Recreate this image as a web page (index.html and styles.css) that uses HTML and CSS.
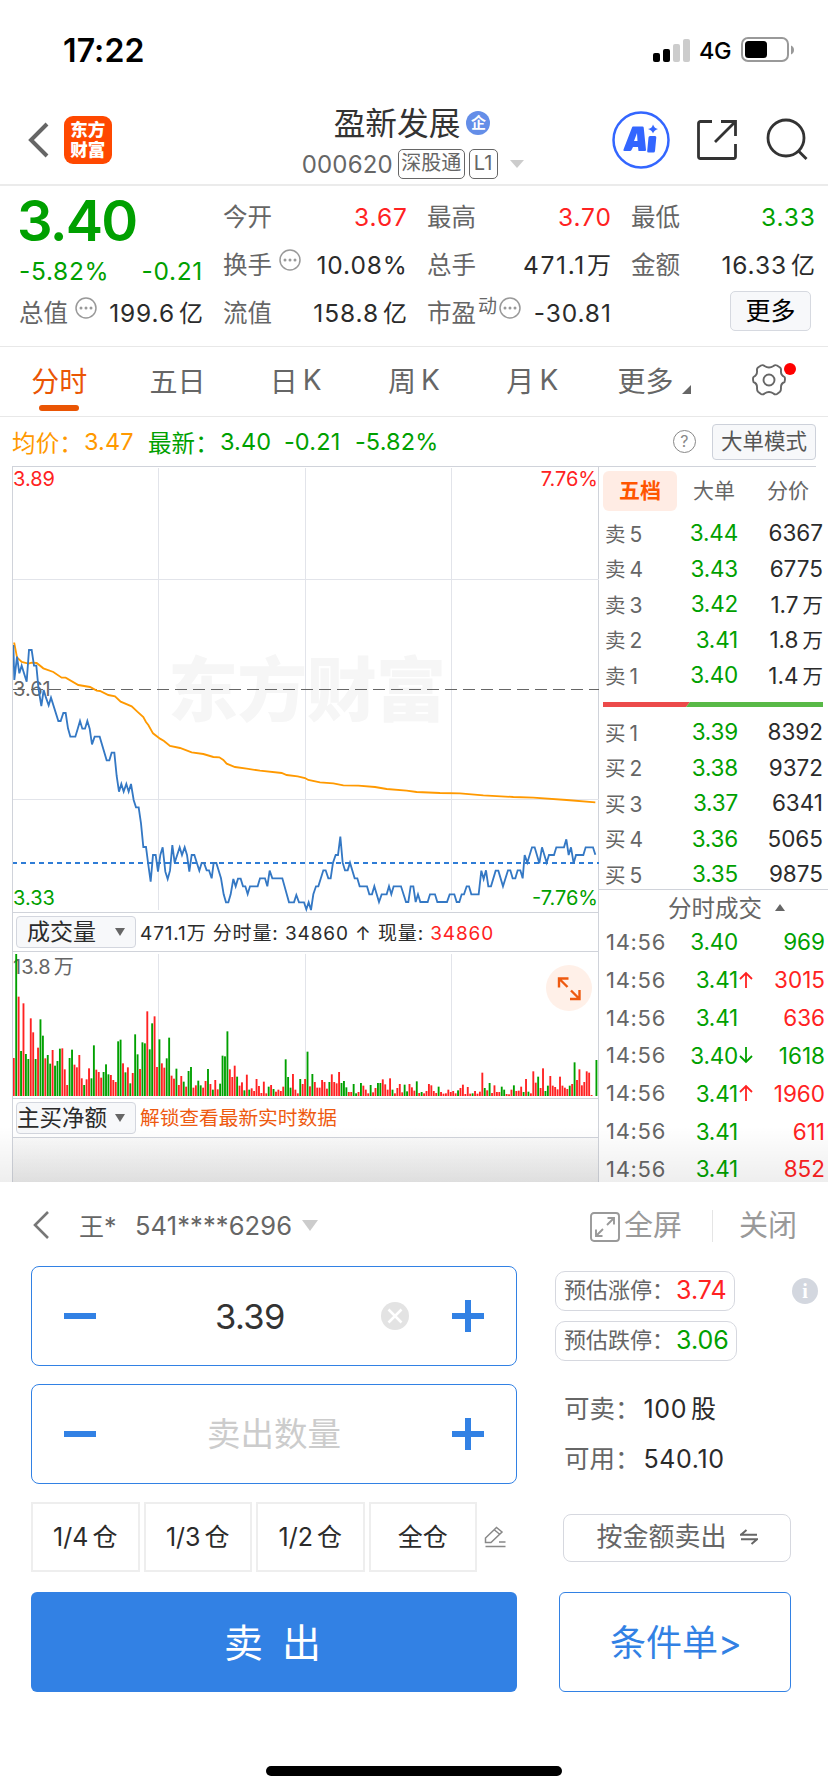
FILE: index.html
```html
<!DOCTYPE html>
<html lang="zh-CN">
<head>
<meta charset="utf-8">
<title>盈新发展 000620</title>
<link rel="stylesheet" href="styles.css">
</head>
<body>
<div class="screen">
  <div class="status">
    <span class="clock">17:22</span>
    <div class="status-right">
      <svg width="37" height="23" viewBox="0 0 37 23"><rect x="0" y="14" width="7" height="9" rx="2"/><rect x="10" y="10" width="7" height="13" rx="2"/><rect x="20" y="5" width="7" height="18" rx="2" fill="#ccc"/><rect x="30" y="0" width="7" height="23" rx="2" fill="#ccc"/></svg>
      <span class="net">4G</span>
      <svg width="54" height="26" viewBox="0 0 54 26"><rect x="1" y="1" width="46" height="23" rx="6" fill="none" stroke="#999" stroke-width="2"/><rect x="4" y="4" width="22" height="17" rx="3.5"/><path d="M50 8.500c4 1.500 4 7.500 0 9z" fill="#999"/></svg>
    </div>
  </div>

  <header class="header">
    <svg class="back" width="22" height="36" viewBox="0 0 22 36"><path d="M19 2 3 18l16 16" fill="none" stroke="#666" stroke-width="4"/></svg>
    <div class="logo"><span>东方</span><span>财富</span></div>
    <div class="title-block">
      <div class="title-line"><span class="stock-name">盈新发展</span><span class="corp">企</span></div>
      <div class="code-line"><span class="code">000620</span><span class="tag">深股通</span><span class="tag tag-l1">L1</span><i class="caret"></i></div>
    </div>
    <svg class="ai" width="58" height="58" viewBox="0 0 58 58"><circle cx="29" cy="29" r="27.500" fill="none" stroke="#36f" stroke-width="2.500"/><path fill="#36f" fill-rule="evenodd" d="M21 15.500h9.500q1 0 1.200 1L34 39q0 1-1 1h-6.500l-.500-4h-5l-1.500 3q-.500 1-1.500 1h-5.500q-1.500 0-1-1.500L20 16.500q.300-1 1-1zM25 22l-3 8h3.500z"/><path fill="#36f" d="M38 25h5q1.500 0 1.300 1.500L43 40q-.200 1.500-1.500 1.500h-5q-1.500 0-1.300-1.500L36.500 26.500Q36.700 25 38 25zM41 13.500q1.500 4 5 4.500-4 1-5 4.500-1-3.500-5-4.500 4-.500 5-4.500z"/></svg>
    <svg class="share" width="42" height="42" viewBox="0 0 42 42" fill="none" stroke="#333" stroke-width="2.800"><path d="M16 2.500H4.500a2 2 0 0 0-2 2v33a2 2 0 0 0 2 2h33a2 2 0 0 0 2-2V25M25 2.500h14.500V17M39 3 19 23"/></svg>
    <svg class="search" width="44" height="44" viewBox="0 0 44 44" fill="none" stroke="#333" stroke-width="2.800"><circle cx="21" cy="20" r="18"/><path d="m33.500 33 8 8"/></svg>
  </header>

  <section class="quote">
    <div class="q-main">
      <div class="price">3.40</div>
      <div class="cell green"><span>-5.82%</span><span>-0.21</span></div>
      <div class="cell"><label>总值</label><svg class="dots" width="22" height="22" viewBox="0 0 22 22"><circle cx="11" cy="11" r="10" fill="none" stroke="#999" stroke-width="1.500"/><g fill="#999"><circle cx="6" cy="11" r="1.500"/><circle cx="11" cy="11" r="1.500"/><circle cx="16" cy="11" r="1.500"/></g></svg><b>199.6<em>亿</em></b></div>
    </div>
    <div class="q-col">
      <div class="cell"><label>今开</label><b class="red">3.67</b></div>
      <div class="cell"><label>换手</label><svg class="dots" width="22" height="22" viewBox="0 0 22 22"><circle cx="11" cy="11" r="10" fill="none" stroke="#999" stroke-width="1.500"/><g fill="#999"><circle cx="6" cy="11" r="1.500"/><circle cx="11" cy="11" r="1.500"/><circle cx="16" cy="11" r="1.500"/></g></svg><b>10.08%</b></div>
      <div class="cell"><label>流值</label><b>158.8<em>亿</em></b></div>
    </div>
    <div class="q-col">
      <div class="cell"><label>最高</label><b class="red">3.70</b></div>
      <div class="cell"><label>总手</label><b class="loose">471.1<em class="near">万</em></b></div>
      <div class="cell"><label>市盈<sup>动</sup></label><svg class="dots tight" width="22" height="22" viewBox="0 0 22 22"><circle cx="11" cy="11" r="10" fill="none" stroke="#999" stroke-width="1.500"/><g fill="#999"><circle cx="6" cy="11" r="1.500"/><circle cx="11" cy="11" r="1.500"/><circle cx="16" cy="11" r="1.500"/></g></svg><b>-30.81</b></div>
    </div>
    <div class="q-col">
      <div class="cell"><label>最低</label><b class="green">3.33</b></div>
      <div class="cell"><label>金额</label><b>16.33<em>亿</em></b></div>
      <button class="more">更多</button>
    </div>
  </section>

  <nav class="tabs">
    <span class="tab on">分时</span><span class="tab">五日</span><span class="tab">日<i>K</i></span><span class="tab">周<i>K</i></span><span class="tab">月<i>K</i></span><span class="tab">更多<svg class="corner" width="10" height="10"><path d="M9 0v9H0z" fill="#666"/></svg></span>
    <span class="tab gear"><svg width="36" height="36" viewBox="-18 -18 36 36" fill="none" stroke="#666" stroke-width="1.900" stroke-linejoin="round"><circle r="5.500"/><path d="M-8-14.500q2-1 3.500.500 4.500 3 9 0 1.500-1.500 3.500-.500l3 2q1.300 1 1 3-.500 4.500 3.500 6.500 1 1.500 0 5-4 1.500-3.500 6.500 0 2-1 3.200l-3 2.300q-2 1-3.500-.500-4.500-3-9 0-1.500 1.500-3.500.500l-3-2.300q-1-1.200-1-3.200.5-5-3.500-6.500-1-3.500 0-5 4-2 3.500-6.500-.3-2 1-3z"/></svg><u class="dot"></u></span>
  </nav>

  <div class="info">
    <span class="orange">均价：</span><span class="orange i1">3.47</span>
    <span class="green i2">最新：</span><span class="green i3">3.40</span><span class="green i4">-0.21</span><span class="green i5">-5.82%</span>
    <span class="help">?</span><button class="mode">大单模式</button>
  </div>

  <div class="market">
    <div class="charts">
      <svg class="pane" width="586" height="445" viewBox="13 467 586 445">
        <text class="mark" x="168" y="716" textLength="278">东方财富</text>
        <path d="M158.500 468v442M305.500 468v442M451.500 468v442M13 579.500h586M13 799.500h586" stroke="#e2e4ea" fill="none"/>
        <path d="M13 689.500h586" stroke="#666" stroke-dasharray="12 6"/>
        <path d="M13 863h586" stroke="#2e7cd6" stroke-width="2" stroke-dasharray="5 4" stroke-dashoffset="1"/>
        <g class="axis"><text x="13" y="486" fill="#f22">3.89</text><text x="598" y="486" fill="#f22" text-anchor="end">7.76%</text><text x="13" y="696" fill="#666">3.61</text><text x="13" y="905" fill="#00a000">3.33</text><text x="598" y="905" fill="#00a000" text-anchor="end">-7.76%</text></g>
        <g transform="translate(0 620) scale(.33333)" fill="none" stroke-width="5.500">
          <polyline stroke="#ff9900" points="40,70 43,70 51,112 65,126 85,131 95,128 110,129 130,145 160,156 185,173 197,173 235,195 270,201 290,212 300,213 325,225 345,229 362,245 395,259 412,275 430,291 438,306 445,315 459,340 480,356 492,363 510,378 540,384 575,397 610,402 640,411 658,412 670,420 680,431 705,441 740,446 780,452 845,459 860,465 893,469 915,474 925,480 960,487 1000,490 1030,496 1075,497 1125,501 1160,507 1220,512 1250,516 1320,519 1380,520 1450,526 1540,531 1600,533 1700,540 1786,547"/>
          <polyline stroke="#3478c4" points="40,75 43,180 51,110 58,160 65,137 80,185 87,90 95,90 102,137 109,137 116,210 124,258 131,210 138,233 146,256 153,233 175,303 182,303 190,279 197,279 204,325 211,350 226,350 233,327 240,303 247,326 255,326 262,303 269,326 276,373 284,350 299,350 320,421 328,421 335,398 343,398 350,468 357,515 364,492 371,515 379,492 386,515 393,492 401,540 408,562 416,562 423,610 430,681 438,681 445,735 452,785 459,705 467,705 474,755 481,705 488,682 496,755 503,777 510,752 517,675 524,728 539,682 546,705 554,682 561,705 568,755 575,705 583,705 598,752 605,729 612,729 620,751 627,751 635,775 641,729 649,729 663,775 671,823 678,847 685,847 692,823 700,777 707,799 714,776 722,776 729,799 736,799 743,822 750,799 773,799 780,775 795,775 802,799 809,752 817,775 847,775 867,847 882,847 889,825 897,847 912,847 919,868 926,847 933,870 940,823 948,799 955,799 970,751 977,751 985,775 992,775 999,728 1007,705 1014,705 1021,650 1028,728 1035,751 1043,751 1050,728 1064,775 1072,775 1079,799 1101,799 1108,823 1116,823 1123,799 1137,846 1145,823 1160,823 1167,799 1174,823 1181,799 1203,799 1218,846 1225,846 1232,799 1240,799 1247,846 1254,823 1261,846 1283,846 1290,823 1305,823 1312,846 1341,846 1349,823 1363,823 1370,846 1378,846 1385,823 1392,823 1400,799 1407,799 1414,823 1436,823 1444,752 1451,777 1458,751 1465,799 1473,799 1487,752 1495,752 1509,799 1524,751 1531,751 1538,775 1546,775 1553,751 1561,751 1568,775 1574,705 1582,728 1596,682 1604,682 1618,730 1626,682 1640,728 1647,705 1662,705 1669,682 1692,682 1699,658 1706,705 1713,682 1721,730 1728,705 1750,705 1757,682 1779,682 1786,704"/>
        </g>
      </svg>
      <div class="bar-row"><button class="sel">成交量<i></i></button><span class="vol-text">471.1万 分时量: 34860 ↑ 现量: <span class="red">34860</span></span></div>
      <div class="volume">
        <svg class="pane" width="586" height="146" viewBox="13 952 586 146">
          <path d="M158.500 954v142M305.500 954v142M451.500 954v142" stroke="#e2e4ea"/>
          <text class="axis" x="13" y="974" fill="#666">13.8<tspan dx="3">万</tspan></text>
          <g id="bars" transform="translate(0 900) scale(.33333)"></g>
        </svg>
        <svg class="expand" width="46" height="46" viewBox="0 0 46 46" fill="none" stroke="#ee5a10" stroke-width="2.400"><circle cx="23" cy="23" r="23" fill="#fff0e8" stroke="none"/><path d="M22.500 13.500H13v9M13.500 14l8 8M24 34h9.500v-9M33 33.500l-8-8"/></svg>
      </div>
      <div class="bar-row third"><button class="sel sel-wide">主买净额<i></i></button><span class="unlock">解锁查看最新实时数据</span></div>
      <div class="locked"></div>
    </div>

    <aside class="book">
      <div class="book-tabs"><span class="on">五档</span><span>大单</span><span>分价</span></div>
      <div class="levels">
        <div><label>卖<i>5</i></label><b>3.44</b><span>6367</span></div>
        <div><label>卖<i>4</i></label><b>3.43</b><span>6775</span></div>
        <div><label>卖<i>3</i></label><b>3.42</b><span>1.7<em>万</em></span></div>
        <div><label>卖<i>2</i></label><b>3.41</b><span>1.8<em>万</em></span></div>
        <div><label>卖<i>1</i></label><b>3.40</b><span>1.4<em>万</em></span></div>
      </div>
      <svg class="ratio" width="220" height="5"><path d="M0 0h87l-4 5H0z" fill="#ec4a4a"/><path d="M87 0h133v5H83z" fill="#58b947"/></svg>
      <div class="levels">
        <div><label>买<i>1</i></label><b>3.39</b><span>8392</span></div>
        <div><label>买<i>2</i></label><b>3.38</b><span>9372</span></div>
        <div><label>买<i>3</i></label><b>3.37</b><span>6341</span></div>
        <div><label>买<i>4</i></label><b>3.36</b><span>5065</span></div>
        <div><label>买<i>5</i></label><b>3.35</b><span>9875</span></div>
      </div>
      <div class="deal-head">分时成交<i></i></div>
      <div class="deals">
        <div><label>14:56</label><b>3.40</b><u></u><span class="green">969</span></div>
        <div><label>14:56</label><b>3.41</b><u><svg width="14" height="18" viewBox="0 0 14 18" fill="none" stroke="#f22" stroke-width="1.800"><path d="M7 17V2M1 8l6-6 6 6"/></svg></u><span class="red">3015</span></div>
        <div><label>14:56</label><b>3.41</b><u></u><span class="red">636</span></div>
        <div><label>14:56</label><b>3.40</b><u><svg width="14" height="18" viewBox="0 0 14 18" fill="none" stroke="#00a000" stroke-width="1.800"><path d="M7 1v15M1 10l6 6 6-6"/></svg></u><span class="green">1618</span></div>
        <div><label>14:56</label><b>3.41</b><u><svg width="14" height="18" viewBox="0 0 14 18" fill="none" stroke="#f22" stroke-width="1.800"><path d="M7 17V2M1 8l6-6 6 6"/></svg></u><span class="red">1960</span></div>
        <div><label>14:56</label><b>3.41</b><u></u><span class="red">611</span></div>
        <div><label>14:56</label><b>3.41</b><u></u><span class="red">852</span></div>
      </div>
    </aside>
    <div class="shade"></div>
  </div>

  <section class="sheet">
    <div class="sheet-head">
      <svg width="17" height="30" viewBox="0 0 17 30"><path d="M15 2 2 15l13 13" fill="none" stroke="#777" stroke-width="2.600"/></svg>
      <span class="holder">王*</span><span class="acct">541****6296</span><i class="caret big"></i>
      <svg class="full-icon" width="30" height="30" viewBox="0 0 30 30" fill="none" stroke="#999" stroke-width="1.900"><rect x="1" y="1" width="28" height="28" rx="3"/><path d="M17.500 6H24v6.500M23.500 6.500 17 13M12.500 24H6v-6.500M6.500 23.500 13 17"/></svg>
      <span class="full">全屏</span><span class="close">关闭</span>
    </div>
    <div class="sheet-body">
      <div class="form">
        <div class="field"><i class="minus"></i><span class="val">3.39</span><svg class="clear" width="28" height="28" viewBox="0 0 28 28"><circle cx="14" cy="14" r="14" fill="#e3e3e3"/><path d="m7.500 7.500 13 13m0-13-13 13" stroke="#fff" stroke-width="2.500"/></svg><i class="plus"></i></div>
        <div class="field"><i class="minus"></i><span class="ph">卖出数量</span><i class="plus"></i></div>
        <div class="chips"><span>1/4<em>仓</em></span><span>1/3<em>仓</em></span><span>1/2<em>仓</em></span><span>全仓</span>
          <svg width="22" height="22" viewBox="0 0 22 22" fill="none" stroke="#888" stroke-width="1.500"><path d="M1.500 20.500h20M15 16h6.500M1.500 16.500v-4.500L12.500 1.500l5.500 4.500L7 16.500zM10.500 4l5.500 4.500"/></svg></div>
        <button class="sell">卖出</button>
      </div>
      <div class="side">
        <div class="limits"><div class="pills"><div class="pill">预估涨停：<b class="red">3.74</b></div><div class="pill">预估跌停：<b class="green">3.06</b></div></div><span class="about">i</span></div>
        <div class="avail"><div>可卖：<b>100<em>股</em></b></div><div>可用：<b>540.10</b></div></div>
        <button class="by-amount">按金额卖出<svg width="18" height="16" viewBox="0 0 18 16" fill="none" stroke="#666" stroke-width="2"><path d="M0 5.800h17M6.500 1 1 5.800M1 10.200h16L11.500 15"/></svg></button>
        <button class="cond">条件单&gt;</button>
      </div>
    </div>
    <div class="home"></div>
  </section>
</div>
<script src="bars.js"></script>
</body>
</html>
```
FILE: styles.css
```css
* { box-sizing: border-box; }
body { margin: 0; background: #fff; color: #2b2b2b; font-family: Inter, "Noto Sans CJK SC", sans-serif; }
button { font: inherit; padding: 0; margin: 0; background: none; }
i, em { font-style: normal; }
b, label { font-weight: 400; }
u { text-decoration: none; }
svg { display: block; flex: none; }
span, label, b, div, button { white-space: nowrap; }
.screen { width: 828px; height: 1792px; overflow: hidden; display: flex; flex-direction: column; }
.red { color: #f22 !important; }
.green { color: #00a000 !important; }
.orange { color: #ff9900; }

.status { height: 100px; padding: 0 33px 0 63px; display: flex; justify-content: space-between; align-items: center; }
.clock { font-size: 32px; font-weight: 600; color: #000; letter-spacing: .1px; }
.status-right { display: flex; align-items: center; }
.net { font-size: 23.500px; font-weight: 500; color: #000; margin: 0 10px 0 9px; letter-spacing: -.3px; width: 32px; }

.header { height: 86px; border-bottom: 2px solid #ebebeb; display: flex; position: relative; padding: 0 19px 0 28px; }
.back { margin-top: 22px; }
.logo { width: 48px; height: 48px; margin: 16px 0 0 14px; border-radius: 9px; background: #ff4800; color: #fff; display: flex; flex-direction: column; justify-content: center; align-items: center; font-size: 17.500px; font-weight: 900; line-height: 19.500px; padding-bottom: 1px; }
.title-block { width: 224px; margin-left: 190px; }
.title-line { display: flex; align-items: center; height: 46px; padding-left: 32px; }
.stock-name { font-size: 31.700px; color: #333; margin-top: -4px; }
.corp { width: 24px; height: 24px; border-radius: 50%; margin-left: 6px; background: #648ee8; color: #fff; font-size: 15px; font-weight: 700; line-height: 23px; text-align: center; }
.code-line { display: flex; align-items: center; height: 36px; }
.code { font-size: 24px; color: #666; width: 96px; letter-spacing: .2px; }
.tag { width: 67px; height: 30px; border: 1.500px solid #666; border-radius: 5px; font-size: 20px; line-height: 27px; text-align: center; color: #666; }
.tag-l1 { width: 29px; margin-left: 4px; }
.caret { border: 7px solid transparent; border-top: 8px solid #ccc; border-bottom: 0; margin: 0 0 0 12px; }
.ai { margin: 11px 0 0 88px; }
.share { margin: 19px 0 0 26px; }
.search { margin: 18px 0 0 27px; }

.quote { height: 161px; border-bottom: 1px solid #e8e8e8; display: grid; grid-template-columns: repeat(4, 184px); column-gap: 20px; padding: 7px 0 0 19px; }
.price { color: #00a000; font-size: 56px; font-weight: 600; line-height: 56px; height: 60px; letter-spacing: -1.800px; margin-left: -2px; }
.q-main .price + .cell { height: 36px; letter-spacing: .7px; }
.cell { height: 48px; display: flex; align-items: center; justify-content: space-between; font-size: 24.500px; line-height: 48px; position: relative; }
.cell label { color: #666; font-size: 24.500px; }
.cell b { margin-left: auto; margin-right: -.8px; letter-spacing: .9px; }
.cell .loose { letter-spacing: 1.700px; }
.cell em { margin-left: 4px; font-size: 24px; letter-spacing: .8px; }
.cell em.near { margin-left: 1px; }
.cell sup { font-size: 19px; line-height: 0; vertical-align: 9px; margin-left: 2px; }
.dots { margin: -10px 0 0 7px; }
.dots.tight { margin-left: 2px; }
.more { width: 81px; height: 40px; margin: 2px 0 0 99px; border: 1px solid #d6d9e0; border-radius: 5px; background: #f7f8fa; font-size: 25px; line-height: 37px; }

.tabs { height: 70px; border-bottom: 1px solid #e8e8e8; display: grid; grid-template-columns: repeat(7, 1fr); padding-bottom: 3px; }
.tab { position: relative; display: flex; align-items: center; justify-content: center; font-size: 28px; color: #666; }
.tab i { margin-left: 5px; }
.tab.on { color: #ea5504; }
.tab.on::after { content: ""; position: absolute; left: 39px; bottom: 2px; width: 40px; height: 6px; border-radius: 3px; background: #ea5504; }
.corner { margin: 19px -8px 0 8px; }
.dot { position: absolute; right: 32px; top: 16px; width: 12px; height: 12px; border-radius: 50%; background: #f00; }

.info { height: 49px; padding: 0 12px; display: flex; align-items: center; font-size: 23.500px; letter-spacing: .15px; }
.i1, .i3 { width: 64px; margin-left: 1px; }
.i4 { width: 71px; }
.help { margin-left: auto; width: 23px; height: 23px; border: 1.500px solid #888; border-radius: 50%; color: #888; font-size: 16px; line-height: 20px; text-align: center; }
.mode { margin-left: 16px; width: 104px; height: 36px; border: 1px solid #cdd1da; border-radius: 4px; background: #f7f8fa; color: #555; font-size: 21.500px; line-height: 33px; letter-spacing: 0; }

.market { height: 716px; position: relative; display: flex; overflow: hidden; }
.charts { width: 587px; margin-left: 12px; flex: none; border-left: 1px solid #d0d3da; border-right: 1px solid #d0d3da; border-top: 1px solid #d0d3da; }
.pane { margin-right: -1px; }
.mark { font-size: 70px; font-weight: 900; fill: #f6f6f6; }
.axis { font-size: 20px; }
.bar-row { height: 40px; border-top: 1px solid #d0d3da; border-bottom: 1px solid #d0d3da; display: flex; align-items: center; padding-left: 3px; }
.sel { width: 120px; height: 32px; flex: none; border: 1px solid #d3d6de; border-radius: 4px; background: #f7f8fa; color: #2b2b2b; display: flex; align-items: center; justify-content: space-between; padding: 0 10px; font-size: 23px; line-height: 30px; }
.sel i { border: 5px solid transparent; border-top: 8px solid #666; border-bottom: 0; }
.sel-wide { padding-left: 0; font-size: 22.500px; }
.vol-text { margin: -2px 0 0 4px; font-size: 19px; letter-spacing: .87px; }
.unlock { margin: -3px 0 0 4px; font-size: 19.700px; color: #ee5a10; }
.volume { position: relative; height: 146px; }
.expand { position: absolute; left: 533px; top: 13px; }
.locked { height: 51px; background: linear-gradient(#fafafa, #ececec); }

.book { flex: 1; border-top: 1px solid #fff; padding: 0 5px 0 4px; position: relative; }
.book::before { content: ""; position: absolute; left: 0; top: -1px; width: 217px; height: 1px; background: #d0d3da; }
.book-tabs { height: 45px; padding-top: 4px; display: flex; font-size: 21px; line-height: 40px; color: #666; }
.book-tabs span { width: 74px; height: 40px; border-radius: 6px; text-align: center; }
.book-tabs .on { background: #ffece4; color: #ff5500; font-weight: 700; }
.levels { height: 178px; margin: 3px 0 0; }
.levels div, .deals div { height: 35.500px; display: flex; align-items: center; font-size: 22.500px; padding: 0 2px 0 2px; }
.levels label { width: 60px; color: #666; font-size: 20.500px; }
.levels i { margin-left: 4px; font-size: 21px; }
.levels b, .deals b { width: 73px; text-align: right; color: #00a000; letter-spacing: -.2px; }
.levels span, .deals span { margin-left: auto; text-align: right; }
.levels em { margin-left: 4px; font-size: 20.500px; }
.ratio { margin: 9px 0 7px 0; }
.deal-head { height: 36px; margin: -3px -5px 0 -4px; border-top: 1px solid #d0d3da; padding-left: 69px; display: flex; align-items: center; font-size: 23.500px; color: #666; padding-bottom: 1px; }
.deal-head i { margin-left: 13px; border: 5px solid transparent; border-bottom: 7px solid #666; border-top: 0; }
.deals { margin-top: -2px; }
.deals div { height: 37.850px; padding: 0 0 0 3px; }
.deals label { width: 59px; color: #666; font-size: 22px; letter-spacing: .7px; }
.deals u { width: 14px; margin-left: 1px; }
.shade { position: absolute; left: 0; right: 0; bottom: 0; height: 56px; background: linear-gradient(rgba(0,0,0,0), rgba(0,0,0,.065)); }

.sheet { height: 610px; background: #fff; position: relative; }
.sheet-head { height: 84px; padding: 2px 31px 0 33px; display: flex; align-items: center; font-size: 26px; color: #666; }
.holder { margin-left: 29px; width: 56px; font-size: 25px; }
.acct { width: 157px; font-size: 25.500px; letter-spacing: .1px; }
.caret.big { border-width: 11px 8px 0; margin-left: 10px; }
.full-icon { margin: 3px 4px 0 auto; }
.full, .close { font-size: 29px; line-height: 32px; color: #999; margin-top: 2px; }
.full { border-right: 1.500px solid #e5e5e5; padding-right: 30px; }
.close { padding-left: 26px; }
.sheet-body { display: flex; padding-left: 31px; }
.form { width: 486px; }
.field { height: 100px; margin-bottom: 18px; border: 1.500px solid #3281e4; border-radius: 8px; position: relative; display: flex; align-items: center; justify-content: space-between; padding: 0 32px; }
.minus, .plus { width: 32px; height: 6px; background: #3281e4; position: relative; }
.plus::after { content: ""; position: absolute; left: 13px; top: -13px; width: 6px; height: 32px; background: #3281e4; }
.val { font-size: 34.500px; width: 68px; margin-left: 119px; color: #333; letter-spacing: -.6px; }
.clear { margin: 0 43px 0 auto; }
.ph { font-size: 33.500px; color: #ccc; margin-top: -6px; }
.chips { display: flex; gap: 4px; height: 70px; align-items: center; margin-bottom: 20px; }
.chips span { width: 108.500px; height: 70px; border: 2px solid #eee; font-size: 25px; line-height: 66px; text-align: center; }
.chips em { margin-left: 4px; }
.chips svg { margin-left: 3px; }
.sell { display: block; width: 486px; height: 100px; border: 0; border-radius: 6px; background: #3281e4; color: #fff; font-size: 39px; letter-spacing: 19px; text-indent: 16px; padding-bottom: 4px; }
.side { padding-left: 38px; width: 311px; }
.limits { display: flex; justify-content: space-between; padding-top: 5px; height: 114px; }
.pill { height: 40px; margin-bottom: 10px; border: 1.500px solid #d6d8df; border-radius: 10px; font-size: 22px; line-height: 37px; color: #666; padding: 0 7px 0 8px; width: max-content; }
.pill b { font-size: 25px; vertical-align: -1px; line-height: 30px; margin-left: 2px; }
.about { width: 26px; height: 26px; margin: 7px 10px 0 0; border-radius: 50%; background: #d3d7df; color: #fff; font: 700 20px/26px "Liberation Serif", serif; text-align: center; }
.avail { padding: 4px 0 0 9px; height: 134px; font-size: 25.500px; line-height: 50px; color: #666; }
.avail b { margin-left: 3px; color: #2b2b2b; font-size: 25px; letter-spacing: .6px; }
.avail em { margin-left: 4px; }
.by-amount { width: 228px; height: 48px; margin: 0 0 30px 8px; border: 1.500px solid #d6d8df; border-radius: 8px; display: flex; align-items: center; justify-content: center; gap: 13px; color: #666; font-size: 26px; line-height: 42px; padding-bottom: 3px; }
.cond { display: block; width: 232px; height: 100px; margin-left: 4px; border: 1.500px solid #3281e4; border-radius: 6px; color: #3281e4; font-size: 36px; padding: 0 0 4px 2px; }
.home { position: absolute; left: 266px; bottom: 16px; width: 296px; height: 10px; border-radius: 5px; background: #000; }
```
FILE: bars.js
```js
// Minute volume bars: colour letter followed by the top edge, "-" for a minute without trades.
const rows = `
r474 g162 r290 g453 r310 g462 g477 r355 r397 g477
r443 g358 g407 r475 g465 g491 r450 g497 g483 g446
r445 r508 r555 g474 g449 r494 r502 r465 r535 g555
r538 r505 g535 g436 r509 r516 r533 g516 g493 g523
r525 r540 r546 g424 g419 r490 g517 r502 g550 r519
g403 g463 r507 g427 g430 r334 g448 g370 r349 r501
g418 r490 r503 g475 g413 r527 r536 g506 r555 r528
g545 r560 g513 g501 r563 r556 g542 g556 r563 r543
g507 r552 g569 r540 r568 g551 g467 g469 g394 r508
r531 r497 g530 r557 r547 g571 r524 g569 r565 r573
r537 r558 r579 r545 r580 g560 r555 g567 r575 r569
r573 r560 g478 g531 g563 r522 r569 r580 g537 r552
r537 g455 r559 g522 r546 r563 r563 r540 r546 r566
g546 r523 r546 r550 r516 g549 g543 g562 r576 r576
g552 g580 r576 g549 r557 r569 r580 g555 r577 r564
g549 g549 r538 r553 r569 r535 g569 r580 r564 r552
r577 g554 g574 r552 r562 r572 g544 r579 g576 r580
r573 r552 r556 r573 r579 g560 r576 r581 r580 r569
r576 r573 r580 g571 r564 r554 r582 r561 r581 g580
r573 r581 r575 r518 g564 r571 g549 r579 r556 r576
r576 g560 g569 r582 r583 r569 g556 r573 r572 r560
g576 r537 g575 r580 r514 r548 g530 r564 r505 g573
g557 r528 r557 r561 r568 r530 r557 r563 r567 g557
r552 g487 r540 r508 r556 r546 r514 r518 r585 -
g480`.trim().split(/\s+/);
const group = document.getElementById("bars");
const step = 1748 / (rows.length - 1);
rows.forEach((row, i) => {
  if (row === "-") return;
  const top = Number(row.slice(1));
  const bar = document.createElementNS("http://www.w3.org/2000/svg", "rect");
  bar.setAttribute("x", 38.5 + i * step);
  bar.setAttribute("y", top);
  bar.setAttribute("width", 5.6);
  bar.setAttribute("height", 588 - top);
  bar.setAttribute("fill", row[0] === "r" ? "#f22" : "#00a000");
  group.append(bar);
});
```
